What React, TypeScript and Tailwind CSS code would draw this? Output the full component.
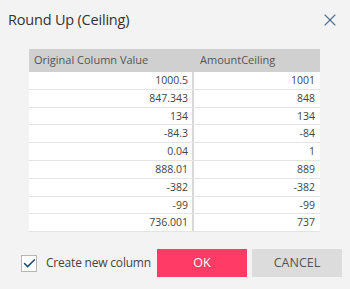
import { Check, X } from 'lucide-react';

const rows: [string, string][] = [
  ['1000.5', '1001'],
  ['847.343', '848'],
  ['134', '134'],
  ['-84.3', '-84'],
  ['0.04', '1'],
  ['888.01', '889'],
  ['-382', '-382'],
  ['-99', '-99'],
  ['736.001', '737'],
];

export default function App() {
  return (
    <div
      className="w-[350px] h-[289px] bg-[#f3f3f3] flex flex-col overflow-hidden"
      style={{ fontFamily: '"Open Sans", "Noto Sans", sans-serif' }}
    >
      <div className="flex items-center justify-between pl-2 pr-[10px] h-[40px]">
        <h1 className="text-[14.5px] text-[#333] tracking-[-0.2px]">Round Up (Ceiling)</h1>
        <X className="w-[20px] h-[20px] text-[#4f6f93]" strokeWidth={1.3} />
      </div>

      <div className="ml-[29px] mt-[9px] w-[291px]">
        <div className="flex h-[23px] bg-[#d0d0d0] text-[11px] text-[#555] items-center">
          <div className="w-[165px] pl-[5px]">Original Column Value</div>
          <div className="flex-1 pl-[6px]">AmountCeiling</div>
        </div>
        {rows.map(([a, b], i) => (
          <div key={i} className="flex h-[17.8px] bg-white border-b border-[#e4e4e4] text-[10.5px] text-[#444]">
            <div className="w-[165px] border-r-2 border-[#d8d8d8] text-right pr-[4px] leading-[17px]">{a}</div>
            <div className="flex-1 text-right pr-[5px] leading-[17px]">{b}</div>
          </div>
        ))}
      </div>

      <div className="flex items-center mt-[17px] h-[28px]">
        <div className="ml-[21px] w-[16px] h-[17px] bg-white border border-[#b5b5b5] flex items-center justify-center">
          <Check className="w-[15px] h-[15px] shrink-0 text-[#1e4a7a]" strokeWidth={2.4} />
        </div>
        <span className="ml-[9px] text-[12px] text-[#444] tracking-[-0.2px]">Create new column</span>
        <button className="ml-auto w-[90px] h-[28px] bg-[#ff3b66] text-white text-[12.5px]">OK</button>
        <button className="ml-[5px] mr-[8px] w-[90px] h-[28px] bg-[#dcdcdc] text-[#555] text-[12.5px]">CANCEL</button>
      </div>
    </div>
  );
}
